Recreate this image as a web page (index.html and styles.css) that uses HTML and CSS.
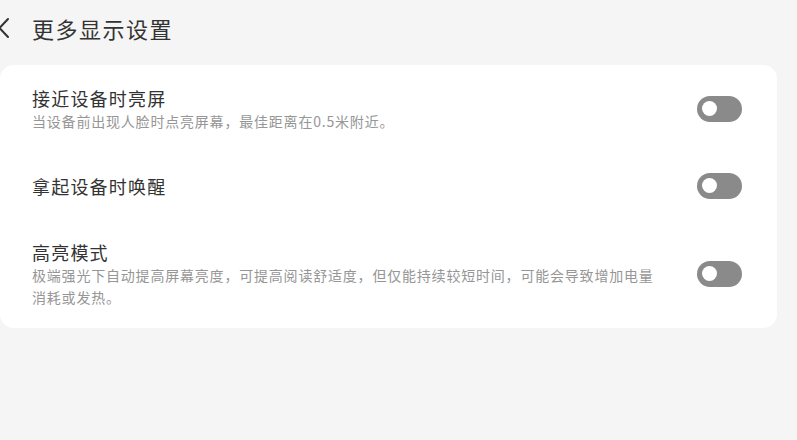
FILE: index.html
```html
<!DOCTYPE html>
<html lang="zh-CN">
<head>
    <meta charset="UTF-8">
    <meta name="viewport" content="width=device-width, initial-scale=1.0">
    <title>更多显示设置</title>
    <link rel="stylesheet" href="styles.css">
</head>
<body>
    <header class="topbar">
        <svg class="back" width="12" height="22" viewBox="0 0 12 22">
            <path d="M10 2 L1.5 11 L10 20" fill="none" stroke="#333" stroke-width="2" stroke-linecap="round" stroke-linejoin="round"/>
        </svg>
        <h1>更多显示设置</h1>
    </header>

    <div class="card">
        <div class="row">
            <div class="text">
                <div class="title">接近设备时亮屏</div>
                <div class="desc">当设备前出现人脸时点亮屏幕，最佳距离在0.5米附近。</div>
            </div>
            <span class="switch"></span>
        </div>
        <div class="row">
            <div class="text">
                <div class="title">拿起设备时唤醒</div>
            </div>
            <span class="switch"></span>
        </div>
        <div class="row">
            <div class="text">
                <div class="title">高亮模式</div>
                <div class="desc">极端强光下自动提高屏幕亮度，可提高阅读舒适度，但仅能持续较短时间，可能会导致增加电量消耗或发热。</div>
            </div>
            <span class="switch"></span>
        </div>
    </div>
</body>
</html>
```

FILE: styles.css
```css
body {
    margin: 0;
    background: #f5f5f5;
    font-family: "Noto Sans CJK SC", "Noto Sans", sans-serif;
    color: #333;
}
.topbar {
    display: flex;
    align-items: center;
    height: 30px;
    padding: 13px 0 22px 0;
    position: relative;
}
.back {
    position: absolute;
    left: -2px;
    top: 17px;
}
h1 {
    margin: 0 0 0 32px;
    font-size: 22px;
    font-weight: normal;
    line-height: 30px;
    letter-spacing: 1.5px;
    color: #333;
}
.card {
    width: 777px;
    background: #fff;
    border-radius: 14px;
}
.row {
    display: flex;
    align-items: center;
    gap: 36px;
    padding: 20.5px 35px 20.5px 32px;
}
.text {
    flex: 1;
}
.title {
    font-size: 18px;
    line-height: 24px;
    letter-spacing: 1.2px;
    color: #333;
}
.desc {
    font-size: 14px;
    line-height: 22px;
    letter-spacing: 0.8px;
    color: #969696;
}
.switch {
    flex: none;
    width: 45px;
    height: 26px;
    border-radius: 13px;
    background: #8a8a8a;
    position: relative;
}
.switch::after {
    content: "";
    position: absolute;
    left: 5px;
    top: 5.5px;
    width: 15px;
    height: 15px;
    border-radius: 50%;
    background: #fff;
}
```
